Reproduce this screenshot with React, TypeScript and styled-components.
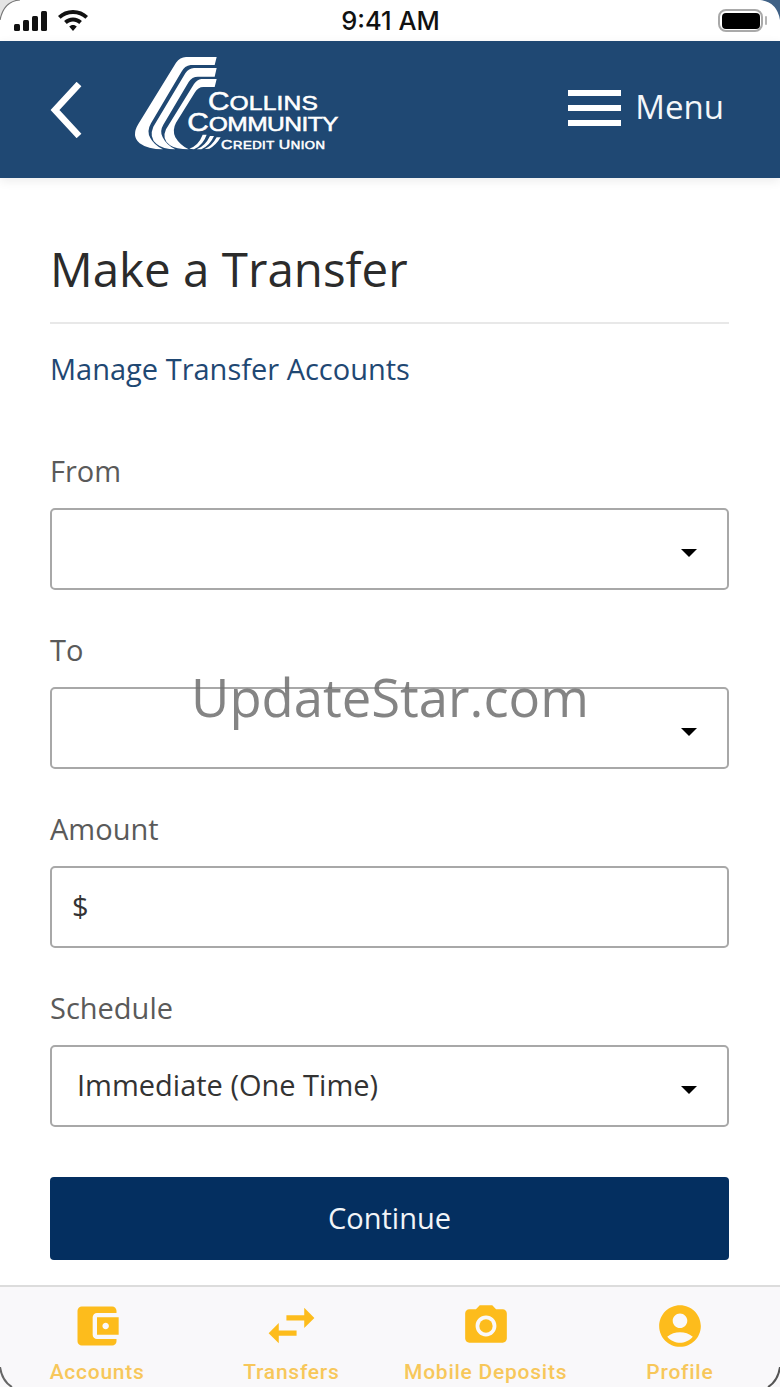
import React from 'react';
import { MdAccountBalanceWallet, MdAccountCircle, MdPhotoCamera, MdSwapHoriz } from 'react-icons/md';
import styled, { createGlobalStyle, css } from 'styled-components';

const GlobalStyle = createGlobalStyle`
  html, body {
    margin: 0;
    padding: 0;
    background: #fff;
  }
`;

const tabs = [
  { label: 'Accounts', icon: <MdAccountBalanceWallet size={52} /> },
  { label: 'Transfers', icon: <MdSwapHoriz size={61} /> },
  { label: 'Mobile Deposits', icon: <MdPhotoCamera size={50} /> },
  { label: 'Profile', icon: <MdAccountCircle size={50} /> },
];

const Logo = () => (
  <LogoSvg viewBox="0 0 645 330" aria-label="Collins Community Credit Union">
    <path
      fill="#fff"
      d="M260 21 L168 21 Q150 22 138 38 L25 222 Q3 258 29 280 Q53 298 99 298 Q73 286 61 264 Q49 244 63 220 L154 66 Q164 47 182 45 L254 45 Z"
    />
    <path
      fill="#fff"
      d="M260 54 L192 54 Q176 55 166 70 L70 230 Q56 262 80 282 Q98 298 136 298 Q110 286 98 262 Q88 244 100 224 L176 96 Q186 80 204 80 L254 80 Z"
    />
    <path
      fill="#fff"
      d="M260 87 L214 87 Q202 88 192 102 L108 238 Q94 268 120 286 Q138 298 176 298 Q150 286 136 262 Q126 240 138 218 L194 128 Q204 111 220 111 L254 111 Z"
    />
    <path fill="#fff" d="M178 296 Q206 286 218 254 L230 254 Q220 284 192 298 Z" />
    <path fill="#fff" d="M200 298 Q226 288 240 258 L252 258 Q240 286 214 298 Z" />
    <path fill="#fff" d="M224 297 Q246 288 260 262 L272 262 Q258 286 238 296 Z" />
    <LogoText transform="scale(1.19 1)">
      <tspan x="196.6" y="180" fontSize="75">
        C
      </tspan>
      <tspan fontSize="62" letterSpacing="0.5">
        OLLINS
      </tspan>
      <tspan x="144.5" y="243" fontSize="75">
        C
      </tspan>
      <tspan fontSize="62" letterSpacing="-1.5">
        OMMUNITY
      </tspan>
      <tspan x="229.4" y="298" fontSize="40" letterSpacing="1.3">
        C
      </tspan>
      <tspan fontSize="33" letterSpacing="1.3">
        REDIT{' '}
      </tspan>
      <tspan fontSize="40" letterSpacing="1.3">
        U
      </tspan>
      <tspan fontSize="33" letterSpacing="1.3">
        NION
      </tspan>
    </LogoText>
  </LogoSvg>
);

const App: React.FC = () => {
  return (
    <Phone>
      <GlobalStyle />
      <StatusBar>
        <StatusIcons>
          <svg width="35" height="20" viewBox="0 0 35 20">
            <rect x="0" y="13" width="6" height="7" rx="1.5" fill="#111" />
            <rect x="9" y="9" width="6" height="11" rx="1.5" fill="#111" />
            <rect x="18" y="5" width="6" height="15" rx="1.5" fill="#111" />
            <rect x="27" y="0" width="6" height="20" rx="1.5" fill="#111" />
          </svg>
          <svg width="30" height="22" viewBox="0 0 30 22">
            <path
              fill="#111"
              d="M15 0 C9 0 4 2.3 0 6 L2.6 8.8 C5.9 5.7 10.2 3.9 15 3.9 C19.8 3.9 24.1 5.7 27.4 8.8 L30 6 C26 2.3 21 0 15 0 Z M15 7.6 C11.6 7.6 8.5 8.9 6.1 11.1 L8.8 13.9 C10.4 12.4 12.6 11.5 15 11.5 C17.4 11.5 19.6 12.4 21.2 13.9 L23.9 11.1 C21.5 8.9 18.4 7.6 15 7.6 Z M15 15 C13.5 15 12.2 15.6 11.2 16.5 L15 21 L18.8 16.5 C17.8 15.6 16.5 15 15 15 Z"
            />
          </svg>
        </StatusIcons>
        <Clock>9:41 AM</Clock>
        <Battery>
          <BatteryFill />
        </Battery>
      </StatusBar>

      <Header>
        <HeaderLeft>
          <svg width="34" height="56" viewBox="0 0 34 56">
            <path d="M30 2 L6 28 L30 54" fill="none" stroke="#fff" strokeWidth="6.5" />
          </svg>
          <Logo />
        </HeaderLeft>
        <MenuButton>
          <Burger>
            <span />
            <span />
            <span />
          </Burger>
          <MenuLabel>Menu</MenuLabel>
        </MenuButton>
      </Header>

      <Main>
        <Title>Make a Transfer</Title>
        <ManageLink>Manage Transfer Accounts</ManageLink>
        <Form>
          <Group>
            <Label>From</Label>
            <Field>
              <Caret />
            </Field>
          </Group>
          <Group>
            <Label>To</Label>
            <Field>
              <Caret />
            </Field>
          </Group>
          <Group>
            <Label>Amount</Label>
            <Field $inset={20}>
              <Value>$</Value>
            </Field>
          </Group>
          <Group>
            <Label>Schedule</Label>
            <Field>
              <Value>Immediate (One Time)</Value>
              <Caret />
            </Field>
          </Group>
        </Form>
        <ContinueButton>Continue</ContinueButton>
      </Main>

      <TabBar>
        {tabs.map((tab) => (
          <Tab key={tab.label}>
            <TabIcon>{tab.icon}</TabIcon>
            <TabLabel>{tab.label}</TabLabel>
          </Tab>
        ))}
      </TabBar>

      <Watermark>UpdateStar.com</Watermark>

      <Corner $place="tl" viewBox="0 0 20 20">
        <path d="M0 0 H20 Q4 1 0 20 Z" fill="#e4e4e4" />
        <path d="M20 0 Q4 1 0 20" fill="none" stroke="#777" strokeWidth="1.2" />
      </Corner>
      <Corner $place="tr" viewBox="0 0 20 20">
        <path d="M0 0 H20 V20 Q17 2 0 0 Z" fill="#3f6186" />
      </Corner>
      <Corner $place="bl" viewBox="0 0 20 20">
        <path d="M0 0 Q2 14 12 20" fill="none" stroke="#666" strokeWidth="2" />
      </Corner>
      <Corner $place="br" viewBox="0 0 20 20">
        <path d="M20 0 Q18 14 8 20" fill="none" stroke="#555" strokeWidth="2" />
      </Corner>
    </Phone>
  );
};
export default App;

const Phone = styled.div`
  position: relative;
  display: flex;
  flex-direction: column;
  width: 780px;
  height: 1387px;
  overflow: hidden;

  background: #fff;
  font-family: 'Open Sans', sans-serif;
`;

const StatusBar = styled.div`
  display: grid;
  grid-template-columns: 1fr auto 1fr;
  align-items: center;
  height: 41px;
  padding: 0 13px 0 14px;
  box-sizing: border-box;
`;

const StatusIcons = styled.div`
  display: flex;
  align-items: center;
  gap: 9px;
`;

const Clock = styled.div`
  font-family: Inter, sans-serif;
  font-size: 25.5px;
  font-weight: 500;
  color: #111;
`;

const Battery = styled.div`
  position: relative;
  display: flex;
  align-items: center;
  justify-content: center;
  justify-self: end;
  width: 45px;
  height: 23px;
  margin-right: 4px;
  box-sizing: border-box;
  border: 2px solid #a9a9a9;
  border-radius: 8px;

  &::after {
    content: '';
    position: absolute;
    right: -6px;
    top: 5px;
    width: 2px;
    height: 9px;
    border-radius: 1px;
    background: #b5b5b5;
  }
`;

const BatteryFill = styled.div`
  width: 38px;
  height: 16px;
  border-radius: 4px;
  background: #000;
`;

const Header = styled.header`
  display: flex;
  align-items: center;
  justify-content: space-between;
  height: 137px;
  padding: 0 56px 0 49px;
  box-sizing: border-box;
  flex-shrink: 0;

  background: #1f4873;
  box-shadow: 0 3px 10px rgba(0, 0, 0, 0.08);
`;

const HeaderLeft = styled.div`
  display: flex;
  align-items: center;
  gap: 47px;
`;

const LogoSvg = styled.svg`
  width: 215px;
  height: 110px;
  margin-top: -9px;
`;

const LogoText = styled.text`
  fill: #fff;
  stroke: #fff;
  stroke-width: 1.6px;
  font-family: 'Liberation Sans', sans-serif;
`;

const MenuButton = styled.div`
  display: flex;
  align-items: center;
  gap: 14px;
  margin-top: -4px;
`;

const Burger = styled.div`
  display: flex;
  flex-direction: column;
  gap: 9px;
  width: 53px;

  span {
    height: 6px;
    background: #fff;
  }
`;

const MenuLabel = styled.div`
  margin-top: -2px;

  font-size: 33px;
  line-height: 44px;
  color: #f4f7fa;
`;

const Main = styled.main`
  display: flex;
  flex-direction: column;
  flex: 1;
  padding: 61px 51px 0 50px;
`;

const Title = styled.h1`
  margin: 0;
  padding-bottom: 23px;
  border-bottom: 2px solid #e8e8e8;

  font-size: 47.5px;
  font-weight: 400;
  line-height: 60px;
  color: #2b2b2b;
`;

const ManageLink = styled.a`
  margin-top: 25px;

  font-size: 29px;
  line-height: 40px;
  color: #1f4873;
`;

const Form = styled.div`
  display: flex;
  flex-direction: column;
  gap: 43px;
  margin-top: 65px;
`;

const Group = styled.div`
  display: flex;
  flex-direction: column;
  gap: 20px;
`;

const Label = styled.label`
  font-size: 29px;
  line-height: 34px;
  color: #5a5a5a;
`;

const Field = styled.div<{ $inset?: number }>`
  position: relative;
  display: flex;
  align-items: center;
  justify-content: space-between;
  height: 82px;
  padding: 0 30px 0 ${(props) => props.$inset ?? 25}px;
  box-sizing: border-box;

  border: 2px solid #a8a8a8;
  border-radius: 5px;
`;

const Value = styled.span`
  margin-top: -3px;

  font-size: 29px;
  color: #333;
`;

const Caret = styled.span`
  width: 0;
  height: 0;
  margin-left: auto;
  margin-top: 7px;
  border-left: 8px solid transparent;
  border-right: 8px solid transparent;
  border-top: 8px solid #000;
`;

const ContinueButton = styled.button`
  height: 83px;
  margin-top: 50px;
  padding: 0 0 3px;
  border: 0;
  border-radius: 4px;

  background: #042f60;
  color: #f2f5f8;
  font-family: 'Open Sans', sans-serif;
  font-size: 29px;
`;

const TabBar = styled.nav`
  display: grid;
  grid-template-columns: repeat(4, 1fr);
  height: 102px;
  padding-right: 3px;
  box-sizing: border-box;
  flex-shrink: 0;

  background: #f9f8fa;
  border-top: 2px solid #dcdcdc;
`;

const Tab = styled.div`
  display: flex;
  flex-direction: column;
  align-items: center;
`;

const TabIcon = styled.div`
  display: flex;
  align-items: center;
  justify-content: center;
  height: 61px;
  margin-top: 8px;

  color: #fdbc1c;
`;

const TabLabel = styled.div`
  font-family: Roboto, sans-serif;
  font-size: 21px;
  font-weight: 500;
  letter-spacing: 0.75px;
  line-height: 32px;
  white-space: nowrap;
  color: #f7c75a;
`;

const Watermark = styled.div`
  position: absolute;
  top: 660px;
  left: 0;
  right: 0;

  text-align: center;
  font-size: 52.6px;
  line-height: 74px;
  color: rgba(110, 110, 110, 0.85);
`;

const cornerPlace = {
  tl: css`
    top: 0;
    left: 0;
  `,
  tr: css`
    top: 0;
    right: 0;
  `,
  bl: css`
    bottom: 0;
    left: 0;
  `,
  br: css`
    bottom: 0;
    right: 0;
  `,
};

const Corner = styled.svg<{ $place: keyof typeof cornerPlace }>`
  position: absolute;
  width: 20px;
  height: 20px;
  ${(props) => cornerPlace[props.$place]}
`;
